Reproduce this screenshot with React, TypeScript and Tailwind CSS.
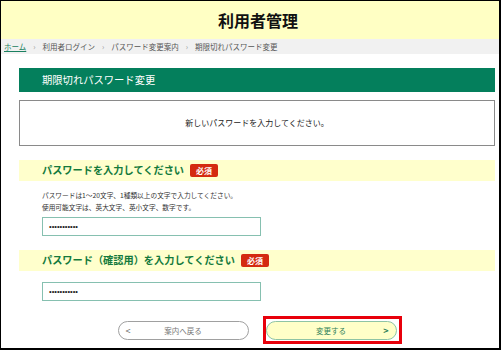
import React from "react";

const jp = { fontFamily: '"Noto Sans CJK JP", "Noto Sans", sans-serif' };

function Badge() {
  return (
    <span className="ml-[6px] inline-flex h-[13px] w-[28px] items-center justify-center rounded-[2px] bg-[#d42a10] text-[8px] font-bold leading-none text-white">
      必須
    </span>
  );
}

function SectionHeader({ children }: { children: React.ReactNode }) {
  return (
    <div className="flex h-[21px] items-center bg-[#ffffcc] pl-[23px]">
      <span className="text-[10.2px] font-bold leading-none text-[#147a3c]">{children}</span>
      <Badge />
    </div>
  );
}

function PasswordInput() {
  return (
    <div className="ml-[23px] flex h-[19px] w-[219px] items-center border border-[#86c0b0] bg-white pl-[6px]">
      <span
        className="text-[7.5px] leading-none text-[#222]"
        style={{ fontFamily: '"Liberation Sans", sans-serif' }}
      >
        •••••••••••
      </span>
    </div>
  );
}

export default function App() {
  return (
    <div
      className="h-[350px] w-[501px] overflow-hidden border-t border-l border-r-2 border-b-2 border-black bg-white"
      style={jp}
    >
      <div className="flex h-[38px] items-center bg-[#ffffc4]">
        <div className="ml-[19px] w-[476px] text-center text-[16px] font-bold leading-none text-[#111]">
          利用者管理
        </div>
      </div>
      <div className="flex h-[15px] items-center gap-[7px] bg-[#f1f1f1] pl-[3px] text-[7.5px] leading-none text-[#555]">
        <span className="text-[#1a8060] underline">ホーム</span>
        <span className="text-[#999]">›</span>
        <span>利用者ログイン</span>
        <span className="text-[#999]">›</span>
        <span>パスワード変更案内</span>
        <span className="text-[#999]">›</span>
        <span>期限切れパスワード変更</span>
      </div>
      <div className="ml-[18px] w-[476px]">
        <div className="mt-[14px] flex h-[24px] items-center bg-[#047f5c] pl-[23px] text-[10.3px] leading-none text-white">
          期限切れパスワード変更
        </div>
        <div className="mt-[8px] flex h-[46px] items-center justify-center border border-[#8a8a8a] text-[8px] leading-none text-[#222]">
          新しいパスワードを入力してください。
        </div>
        <div className="mt-[14px]">
          <SectionHeader>パスワードを入力してください</SectionHeader>
        </div>
        <div className="mt-[8px] pl-[23px] text-[6.7px] leading-[12px] text-[#333]">
          <div>パスワードは1～20文字、1種類以上の文字で入力してください。</div>
          <div>使用可能文字は、英大文字、英小文字、数字です。</div>
        </div>
        <div className="mt-[4px]">
          <PasswordInput />
        </div>
        <div className="mt-[14px]">
          <SectionHeader>パスワード（確認用）を入力してください</SectionHeader>
        </div>
        <div className="mt-[11px]">
          <PasswordInput />
        </div>
        <div className="mt-[20px] flex justify-center gap-[17px]">
          <div className="relative flex h-[19px] w-[131px] items-center justify-center rounded-full border border-[#a0a0a0] bg-white">
            <span className="absolute left-[7px] text-[9px] leading-none text-[#666]">&lt;</span>
            <span className="text-[7.5px] leading-none text-[#777]">案内へ戻る</span>
          </div>
          <div className="relative flex h-[19px] w-[131px] items-center justify-center rounded-full border border-[#8fc4a4] bg-[#ffffc8]">
            <span className="text-[7.5px] leading-none text-[#2f7f5a]">変更する</span>
            <span className="absolute right-[7px] text-[9px] font-bold leading-none text-[#2f7f5a]">&gt;</span>
            <div className="absolute -top-[6px] -bottom-[5px] -left-[4px] -right-[6px] border-[3px] border-[#e8000b]" />
          </div>
        </div>
      </div>
    </div>
  );
}
